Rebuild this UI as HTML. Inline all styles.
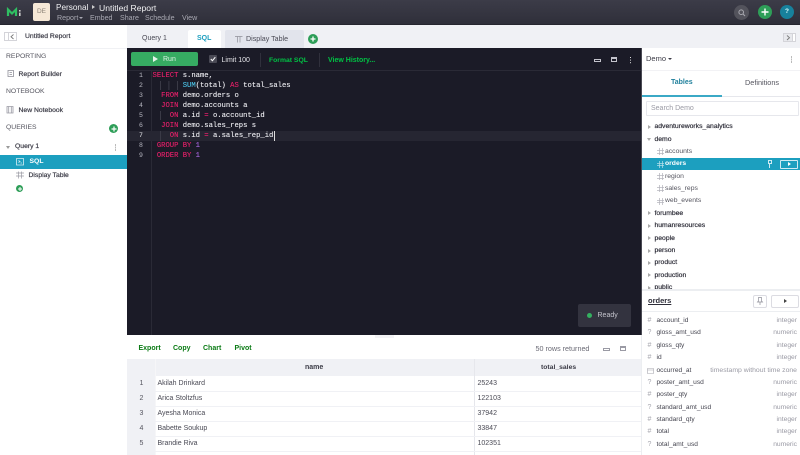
<!DOCTYPE html>
<html><head><meta charset="utf-8">
<style>
html,body{margin:0;padding:0}
body{width:800px;height:455px;overflow:hidden;position:relative;background:#fff;font-family:"Liberation Sans",sans-serif;font-size:7px;color:#2e2e39}
.a{position:absolute}
.t{position:absolute;white-space:nowrap;line-height:10px}
.b{font-weight:bold}
.s{-webkit-text-stroke:.2px currentColor}
svg{position:absolute;overflow:visible}
.code{position:absolute;left:152.5px;white-space:pre;font:7.2px/10px "Liberation Mono",monospace;color:#eeeef2;-webkit-text-stroke:.1px currentColor}
.ln{position:absolute;left:136px;width:10px;text-align:center;font:6.5px/10px "Liberation Mono",monospace;color:#b9b9c2}
.k{color:#e8206a}.f{color:#4cc4e8}.n{color:#a868e0}
.g{color:#00c244;font-weight:bold}
.gr{color:#0a7a14;font-weight:bold}
.ty{position:absolute;right:3px;white-space:nowrap;line-height:10px;color:#9a9aa4;font-size:6.7px}
.ar{position:absolute;left:5.5px;border-left:3px solid #aaa;border-top:2.5px solid transparent;border-bottom:2.5px solid transparent}
.tn{position:absolute;left:12.5px;white-space:nowrap;line-height:10px;color:#2e2e39;font-size:6.8px;-webkit-text-stroke:.2px currentColor}
.tc{position:absolute;left:23px;white-space:nowrap;line-height:10px;color:#55555f;font-size:6.8px}
.ti{position:absolute;left:15px;width:7px;height:7px;background:linear-gradient(#b0b0b8,#b0b0b8) 0 2px/100% .7px no-repeat,linear-gradient(#b0b0b8,#b0b0b8) 0 4.5px/100% .7px no-repeat,linear-gradient(#b0b0b8,#b0b0b8) 2px 0/.7px 100% no-repeat,linear-gradient(#b0b0b8,#b0b0b8) 4.5px 0/.7px 100% no-repeat}
.h{position:absolute;left:5.5px;line-height:10px;color:#a8a8b0;font-size:7px}
.c{position:absolute;left:14.5px;line-height:10px;white-space:nowrap;color:#44444f;font-size:6.6px}
.rn{position:absolute;left:139.5px;white-space:nowrap;line-height:10px;color:#55555f;font-size:7px}
.rv{position:absolute;white-space:nowrap;line-height:10px;color:#4a4a55;font-size:7px}
.rl{position:absolute;left:127px;width:514px;height:1px;background:#f0f1f5}
</style></head><body>

<!-- top bar -->
<div class="a" style="left:0;top:0;width:800px;height:25px;background:linear-gradient(#3c3c48,#2f2f3a);border-bottom:1px solid #26262f;box-sizing:border-box"></div>
<svg style="left:6px;top:8px" width="16" height="9"><path d="M2 8V1.5L6 5.5l4-4V8" fill="none" stroke="#2fbf62" stroke-width="2.2"/><rect x="13" y="2" width="1.6" height="1.6" fill="#ccc"/><rect x="13" y="4.6" width="1.6" height="3.4" fill="#ccc"/></svg>
<div class="a" style="left:33px;top:3px;width:17px;height:18px;background:#f6e8d6;border-radius:2px"></div>
<div class="t" style="left:33px;top:7px;width:17px;text-align:center;color:#8c8478;font-size:6.5px">DE</div>
<div class="t" style="left:56px;top:2.5px;color:#f0f0f2;font-size:8.2px">Personal</div>
<div class="a" style="left:92px;top:5px;border-left:3px solid #ccc;border-top:2.5px solid transparent;border-bottom:2.5px solid transparent"></div>
<div class="t" style="left:99px;top:2.5px;color:#f0f0f2;font-size:8.6px">Untitled Report</div>
<div class="t" style="left:57px;top:13px;color:#a8a8b2;font-size:7.1px">Report</div>
<div class="a" style="left:79px;top:17px;border-top:2px solid #a8a8b2;border-left:2px solid transparent;border-right:2px solid transparent"></div>
<div class="t" style="left:90px;top:13px;color:#a8a8b2;font-size:7.1px">Embed</div>
<div class="t" style="left:120px;top:13px;color:#a8a8b2;font-size:7.1px">Share</div>
<div class="t" style="left:145px;top:13px;color:#a8a8b2;font-size:7.1px">Schedule</div>
<div class="t" style="left:182px;top:13px;color:#a8a8b2;font-size:7.1px">View</div>
<div class="a" style="left:734px;top:4.5px;width:15px;height:15px;border-radius:50%;background:#53535c"></div>
<svg style="left:738px;top:8.5px" width="8" height="8"><circle cx="3.2" cy="3.2" r="2.3" fill="none" stroke="#a9a9b0"/><path d="M5 5l2 2" stroke="#a9a9b0"/></svg>
<div class="a" style="left:758px;top:5px;width:14px;height:14px;border-radius:50%;background:#2e9e58"></div>
<svg style="left:761px;top:8px" width="8" height="8"><path d="M4 .5v7M.5 4h7" stroke="#fff" stroke-width="1.4"/></svg>
<div class="a" style="left:780px;top:5px;width:14px;height:14px;border-radius:50%;background:#17819c"></div>
<div class="t b" style="left:780px;top:7px;width:14px;text-align:center;color:#dff;font-size:6.5px">?</div>

<!-- left sidebar -->
<div class="a" style="left:0;top:48px;width:127px;height:1px;background:#f0f1f4"></div>
<div class="a" style="left:4px;top:32px;width:13px;height:9px;border:1px solid #d4d4d9;box-sizing:border-box;background:#fff"></div>
<div class="a" style="left:7.5px;top:32px;width:1px;height:9px;background:#d4d4d9"></div>
<svg style="left:10px;top:34px" width="5" height="6"><path d="M3.5 .5L1 2.7l2.5 2.3" fill="none" stroke="#777" stroke-width=".9"/></svg>
<div class="t s" style="left:25px;top:32px;color:#3b3b46;font-size:6.8px">Untitled Report</div>
<div class="t" style="left:6px;top:51.5px;color:#55555f;font-size:6.8px">REPORTING</div>
<svg style="left:7px;top:70px" width="8" height="8"><path d="M1 .5h5.500v6H1zM2.500 2.500h2.500M2.500 4.500h2.500" fill="none" stroke="#8e8e98" stroke-width=".8"/></svg>
<div class="t s" style="left:18.5px;top:70px;color:#3b3b46;font-size:6.8px">Report Builder</div>
<div class="t" style="left:6px;top:87px;color:#55555f;font-size:6.8px">NOTEBOOK</div>
<svg style="left:6px;top:106px" width="8" height="8"><path d="M1 .5h6v6.500H1zM2.700 .5v6.500M5.300 .5v6.500" fill="none" stroke="#9a9aa4" stroke-width=".8"/></svg>
<div class="t s" style="left:18.5px;top:105.5px;color:#3b3b46;font-size:6.8px">New Notebook</div>
<div class="t" style="left:6px;top:122.5px;color:#55555f;font-size:6.8px">QUERIES</div>
<div class="a" style="left:109px;top:124px;width:9px;height:9px;border-radius:50%;background:#2e9e58"></div>
<svg style="left:110.5px;top:125.5px" width="6" height="6"><path d="M3 .5v5M.5 3h5" stroke="#fff" stroke-width="1.2"/></svg>
<div class="a" style="left:6px;top:146px;border-top:3px solid #999;border-left:2.5px solid transparent;border-right:2.5px solid transparent"></div>
<div class="t s" style="left:15px;top:142px;color:#3b3b46;font-size:6.8px">Query 1</div>
<div class="a" style="left:114.5px;top:144px;width:1.5px;height:1.5px;background:#bbb;box-shadow:0 2.5px #bbb,0 5px #bbb"></div>
<div class="a" style="left:0;top:155px;width:127px;height:14px;background:#1c9fbf"></div>
<svg style="left:16px;top:158px" width="8" height="8"><path d="M.5.5h7v6.500h-7zM2.500 2.500l1.500 1-1.500 1M4.500 5h1.500" fill="none" stroke="#d6eef4" stroke-width=".8"/></svg>
<div class="t b" style="left:29.5px;top:157px;color:#fff;font-size:6.8px">SQL</div>
<svg style="left:16px;top:171px" width="8" height="8"><path d="M0 2h8M0 5h8M2.500 .5v7M5.500 .5v7" fill="none" stroke="#9a9aa4" stroke-width=".7"/></svg>
<div class="t s" style="left:28.5px;top:170.5px;color:#3b3b46;font-size:6.8px">Display Table</div>
<div class="a" style="left:16px;top:185px;width:7px;height:7px;border-radius:50%;background:#2e9e58"></div>
<svg style="left:17.5px;top:186.5px" width="4" height="4"><path d="M2 0v4M0 2h4" stroke="#fff" stroke-width="1"/></svg>

<!-- tabs -->
<div class="a" style="left:127px;top:25px;width:673px;height:23px;background:#f0f1f5"></div>
<div class="t" style="left:142px;top:33.5px;color:#4a4a55;font-size:7px">Query 1</div>
<div class="a" style="left:187.5px;top:30px;width:33px;height:18px;background:#fff;border-radius:2px 2px 0 0"></div>
<div class="t b" style="left:197px;top:33.5px;color:#1c9fbf;font-size:7px">SQL</div>
<div class="a" style="left:225px;top:30px;width:79px;height:18px;background:#e2e4ec;border-radius:2px 2px 0 0"></div>
<svg style="left:235px;top:35px" width="8" height="8"><path d="M0 1.500h7.500M2.500 1.500v6M5 1.500v6" fill="none" stroke="#8e8e98" stroke-width=".7"/></svg>
<div class="t" style="left:246px;top:33.5px;color:#4a4a55;font-size:7.1px">Display Table</div>
<div class="a" style="left:308px;top:34px;width:10px;height:10px;border-radius:50%;background:#2e9e58"></div>
<svg style="left:310px;top:36px" width="6" height="6"><path d="M3 .5v5M.5 3h5" stroke="#fff" stroke-width="1.3"/></svg>
<div class="a" style="left:783px;top:33px;width:13px;height:9px;border:1px solid #d4d4d9;box-sizing:border-box;background:#e8e9ed"></div>
<div class="a" style="left:792px;top:33px;width:4px;height:9px;border:1px solid #d4d4d9;box-sizing:border-box;background:#fff"></div>
<svg style="left:786px;top:35px" width="5" height="6"><path d="M1 .5l2.500 2.200L1 5" fill="none" stroke="#777" stroke-width=".9"/></svg>

<!-- editor toolbar -->
<div class="a" style="left:127px;top:48px;width:514px;height:287px;background:#1b1b27"></div>
<div class="a" style="left:127px;top:69.5px;width:514px;height:1px;background:#2a2a36"></div>
<div class="a" style="left:131px;top:52px;width:67px;height:14px;background:#36ab62;border-radius:2px"></div>
<div class="a" style="left:153px;top:56px;border-left:5px solid #e6f5ec;border-top:3px solid transparent;border-bottom:3px solid transparent"></div>
<div class="t" style="left:163px;top:54.5px;color:#dff3e6;font-size:7px">Run</div>
<div class="a" style="left:209px;top:55px;width:8px;height:8px;background:#4a4a55;border-radius:1px"></div>
<svg style="left:210px;top:56px" width="6" height="6"><path d="M.8 3l1.600 1.700L5.300 1.200" fill="none" stroke="#fff" stroke-width="1"/></svg>
<div class="t" style="left:221.5px;top:55.5px;color:#e6e6ea;font-size:7px">Limit 100</div>
<div class="a" style="left:259.5px;top:53px;width:1px;height:14px;background:#30303c"></div>
<div class="t g" style="left:269px;top:55.5px;font-size:6.8px">Format SQL</div>
<div class="a" style="left:318.5px;top:53px;width:1px;height:14px;background:#30303c"></div>
<div class="t g" style="left:328px;top:55.5px;font-size:7px">View History...</div>
<div class="a" style="left:594px;top:59px;width:7px;height:3px;border:1px solid #c4c4cc;box-sizing:border-box"></div>
<div class="a" style="left:611px;top:57px;width:6px;height:5px;border:1px solid #c4c4cc;border-top-width:2px;box-sizing:border-box"></div>
<div class="a" style="left:629.5px;top:56.5px;width:1.5px;height:1.5px;background:#ddd;box-shadow:0 2.6px #ddd,0 5.2px #ddd"></div>

<!-- editor -->
<div class="a" style="left:150.5px;top:70px;width:1px;height:265px;background:#2a2a36"></div>
<div class="a" style="left:127px;top:131px;width:514px;height:10px;background:#262632"></div>
<div class="a" style="left:160px;top:81px;width:1px;height:9px;background:#3a3a46;box-shadow:8.4px 0 #3a3a46,17px 0 #3a3a46"></div>
<div class="a" style="left:160px;top:111px;width:1px;height:9px;background:#3a3a46"></div>
<div class="a" style="left:160px;top:131px;width:1px;height:10px;background:#3a3a46"></div>
<div class="ln" style="top:70.5px">1</div><div class="ln" style="top:80.6px">2</div><div class="ln" style="top:90.7px">3</div><div class="ln" style="top:100.8px">4</div><div class="ln" style="top:110.9px">5</div><div class="ln" style="top:121px">6</div><div class="ln" style="top:131px;color:#e6e6ea">7</div><div class="ln" style="top:141.2px">8</div><div class="ln" style="top:151.3px">9</div>
<div class="code" style="top:70.5px"><span class="k">SELECT</span> s.name,</div>
<div class="code" style="top:80.6px">       <span class="f">SUM</span>(total) <span class="k">AS</span> total_sales</div>
<div class="code" style="top:90.7px">  <span class="k">FROM</span> demo.orders o</div>
<div class="code" style="top:100.8px">  <span class="k">JOIN</span> demo.accounts a</div>
<div class="code" style="top:110.9px">    <span class="k">ON</span> a.id <span class="k">=</span> o.account_id</div>
<div class="code" style="top:121px">  <span class="k">JOIN</span> demo.sales_reps s</div>
<div class="code" style="top:131px">    <span class="k">ON</span> s.id <span class="k">=</span> a.sales_rep_id</div>
<div class="code" style="top:141.2px"> <span class="k">GROUP BY</span> <span class="n">1</span></div>
<div class="code" style="top:151.3px"> <span class="k">ORDER BY</span> <span class="n">1</span></div>
<div class="a" style="left:273.5px;top:131px;width:1px;height:10px;background:#ddd"></div>

<div class="a" style="left:578px;top:304px;width:53px;height:23px;background:#33333f;border-radius:2px"></div>
<div class="a" style="left:587px;top:313px;width:5px;height:5px;border-radius:50%;background:#34b060"></div>
<div class="t" style="left:597.5px;top:310.5px;color:#c4c4cc;font-size:7px">Ready</div>

<!-- results -->
<div class="a" style="left:375px;top:335px;width:19px;height:3px;background:#f3f3f5"></div>
<div class="t gr" style="left:138.5px;top:343.5px;font-size:7px">Export</div>
<div class="t gr" style="left:173px;top:343.5px;font-size:7px">Copy</div>
<div class="t gr" style="left:203px;top:343.5px;font-size:7px">Chart</div>
<div class="t gr" style="left:234.5px;top:343.5px;font-size:7px">Pivot</div>
<div class="t" style="left:535.5px;top:343.5px;color:#6a6a75;font-size:7.2px">50 rows returned</div>
<div class="a" style="left:603px;top:348px;width:7px;height:3px;border:1px solid #9a9aa4;box-sizing:border-box"></div>
<div class="a" style="left:620px;top:346px;width:6px;height:5px;border:1px solid #9a9aa4;border-top-width:2px;box-sizing:border-box"></div>
<div class="a" style="left:127px;top:359px;width:514px;height:17px;background:#f0f1f5"></div>
<div class="a" style="left:127px;top:376px;width:28px;height:79px;background:#f0f1f5"></div>
<div class="a" style="left:155px;top:359px;width:1px;height:96px;background:#f6f6f8"></div>
<div class="a" style="left:474px;top:359px;width:1px;height:96px;background:#e6e7ec"></div>
<div class="t b" style="left:305px;top:363px;color:#3b3b46;font-size:7px">name</div>
<div class="t b" style="left:541px;top:363px;color:#3b3b46;font-size:6.8px">total_sales</div>
<div class="rl" style="top:391px"></div>
<div class="rl" style="top:406px"></div>
<div class="rl" style="top:421px"></div>
<div class="rl" style="top:436px"></div>
<div class="rl" style="top:451px"></div>
<div class="rn" style="top:378.5px">1</div>
<div class="rn" style="top:393.5px">2</div>
<div class="rn" style="top:408.5px">3</div>
<div class="rn" style="top:423.5px">4</div>
<div class="rn" style="top:439px">5</div>
<div class="rv" style="left:157.5px;top:378.5px">Akilah Drinkard</div>
<div class="rv" style="left:157.5px;top:393.5px">Arica Stoltzfus</div>
<div class="rv" style="left:157.5px;top:408.5px">Ayesha Monica</div>
<div class="rv" style="left:157.5px;top:423.5px">Babette Soukup</div>
<div class="rv" style="left:157.5px;top:439px">Brandie Riva</div>
<div class="rv" style="left:477.5px;top:378.5px">25243</div>
<div class="rv" style="left:477.5px;top:393.5px">122103</div>
<div class="rv" style="left:477.5px;top:408.5px">37942</div>
<div class="rv" style="left:477.5px;top:423.5px">33847</div>
<div class="rv" style="left:477.5px;top:439px">102351</div>

<!-- right panel -->
<div class="a" style="left:641px;top:48px;width:159px;height:407px;background:#fff"></div>
<div class="a" style="left:640.5px;top:48px;width:1px;height:287px;background:#4a4a54"></div>
<div class="a" style="left:641px;top:335px;width:1px;height:120px;background:#eceef1"></div>
<div class="t" style="left:646px;top:54px;color:#3b3b46;font-size:7.5px">Demo</div>
<div class="a" style="left:668px;top:58px;border-top:2.5px solid #3b3b46;border-left:2px solid transparent;border-right:2px solid transparent"></div>
<div class="a" style="left:790.5px;top:56px;width:1.5px;height:1.5px;background:#bbb;box-shadow:0 2.5px #bbb,0 5px #bbb"></div>
<div class="a" style="left:642px;top:69.5px;width:158px;height:1px;background:#f2f2f5"></div>
<div class="t b" style="left:671px;top:77.5px;color:#20809c;font-size:7px">Tables</div>
<div class="t" style="left:745px;top:77.5px;color:#55555f;font-size:7.3px">Definitions</div>
<div class="a" style="left:642px;top:95px;width:80px;height:1.5px;background:#3ba9c6"></div>
<div class="a" style="left:722px;top:96px;width:78px;height:1px;background:#e6e7ec"></div>
<div class="a" style="left:646px;top:101px;width:153px;height:15px;border:1px solid #e6e7ec;border-radius:1px;box-sizing:border-box"></div>
<div class="t" style="left:651px;top:104px;color:#9a9aa4;font-size:7px">Search Demo</div>

<!-- tree -->
<div class="a" style="left:642px;top:120px;width:158px;height:170px;overflow:hidden">
<div class="ar" style="top:4.5px"></div><div class="tn" style="top:2px">adventureworks_analytics</div>
<div class="a" style="left:5px;top:18px;border-top:3px solid #aaa;border-left:2.5px solid transparent;border-right:2.5px solid transparent"></div><div class="tn" style="top:14.5px">demo</div>
<div class="ti" style="top:28px"></div><div class="tc" style="top:26.5px">accounts</div>
<div class="a" style="left:0;top:38px;width:158px;height:12px;background:#1c9fbf"></div>
<div class="ti" style="top:40.5px;opacity:.7;filter:brightness(1.6)"></div><div class="tc" style="top:39px;color:#fff;font-weight:bold">orders</div>
<div class="a" style="left:125.5px;top:40px;width:4px;height:4px;border:1px solid #cfeaf2;box-sizing:border-box"></div><div class="a" style="left:127px;top:44px;width:1px;height:3.5px;background:#cfeaf2"></div>
<div class="a" style="left:138px;top:39.5px;width:18px;height:9px;border:1px solid #cfeaf2;border-radius:1px;box-sizing:border-box"></div>
<div class="a" style="left:145.5px;top:42px;border-left:3px solid #fff;border-top:2px solid transparent;border-bottom:2px solid transparent"></div>
<div class="ti" style="top:53px"></div><div class="tc" style="top:51.5px">region</div>
<div class="ti" style="top:65px"></div><div class="tc" style="top:63.5px">sales_reps</div>
<div class="ti" style="top:77.5px"></div><div class="tc" style="top:76px">web_events</div>
<div class="ar" style="top:91px"></div><div class="tn" style="top:88.5px">forumbee</div>
<div class="ar" style="top:103.5px"></div><div class="tn" style="top:101px">humanresources</div>
<div class="ar" style="top:116px"></div><div class="tn" style="top:113.5px">people</div>
<div class="ar" style="top:128.5px"></div><div class="tn" style="top:126px">person</div>
<div class="ar" style="top:140.5px"></div><div class="tn" style="top:138px">product</div>
<div class="ar" style="top:153px"></div><div class="tn" style="top:150.5px">production</div>
<div class="ar" style="top:165.5px"></div><div class="tn" style="top:163px">public</div>
</div>
<div class="a" style="left:642px;top:289px;width:158px;height:2px;background:#eceef1"></div>

<!-- orders details -->
<div class="t b" style="left:648px;top:295.5px;color:#2e2e39;font-size:7.5px;text-decoration:underline">orders</div>
<div class="a" style="left:753px;top:294.5px;width:14px;height:13px;border:1px solid #dcdce2;border-radius:2px;box-sizing:border-box"></div>
<svg style="left:756px;top:296.5px" width="8" height="9"><path d="M2.500.5h3v3.500l1 1h-5l1-1zM4 5v3" fill="none" stroke="#8e8e98" stroke-width=".7"/></svg>
<div class="a" style="left:771px;top:294.5px;width:28px;height:13px;border:1px solid #dcdce2;border-radius:2px;box-sizing:border-box"></div>
<div class="a" style="left:783.5px;top:299px;border-left:3.5px solid #444;border-top:2.2px solid transparent;border-bottom:2.2px solid transparent"></div>
<div class="a" style="left:642px;top:311px;width:158px;height:1px;background:#eceef1"></div>

<div class="a" style="left:642px;top:312px;width:158px;height:143px">
<div class="h" style="top:4px">#</div><div class="c" style="top:4px">account_id</div><div class="ty" style="top:4px">integer</div>
<div class="h" style="top:16px">?</div><div class="c" style="top:16px">gloss_amt_usd</div><div class="ty" style="top:16px">numeric</div>
<div class="h" style="top:29px">#</div><div class="c" style="top:29px">gloss_qty</div><div class="ty" style="top:29px">integer</div>
<div class="h" style="top:41px">#</div><div class="c" style="top:41px">id</div><div class="ty" style="top:41px">integer</div>
<svg style="left:5px;top:55px" width="7" height="7"><path d="M.5 1.500h6v5h-6zM.5 3h6" fill="none" stroke="#a8a8b0" stroke-width=".6"/></svg><div class="c" style="top:54px">occurred_at</div><div class="ty" style="top:54px;font-size:6.85px">timestamp without time zone</div>
<div class="h" style="top:66px">?</div><div class="c" style="top:66px">poster_amt_usd</div><div class="ty" style="top:66px">numeric</div>
<div class="h" style="top:78px">#</div><div class="c" style="top:78px">poster_qty</div><div class="ty" style="top:78px">integer</div>
<div class="h" style="top:91px">?</div><div class="c" style="top:91px">standard_amt_usd</div><div class="ty" style="top:91px">numeric</div>
<div class="h" style="top:103px">#</div><div class="c" style="top:103px">standard_qty</div><div class="ty" style="top:103px">integer</div>
<div class="h" style="top:115px">#</div><div class="c" style="top:115px">total</div><div class="ty" style="top:115px">integer</div>
<div class="h" style="top:128px">?</div><div class="c" style="top:128px">total_amt_usd</div><div class="ty" style="top:128px">numeric</div>
</div>
</body></html>
